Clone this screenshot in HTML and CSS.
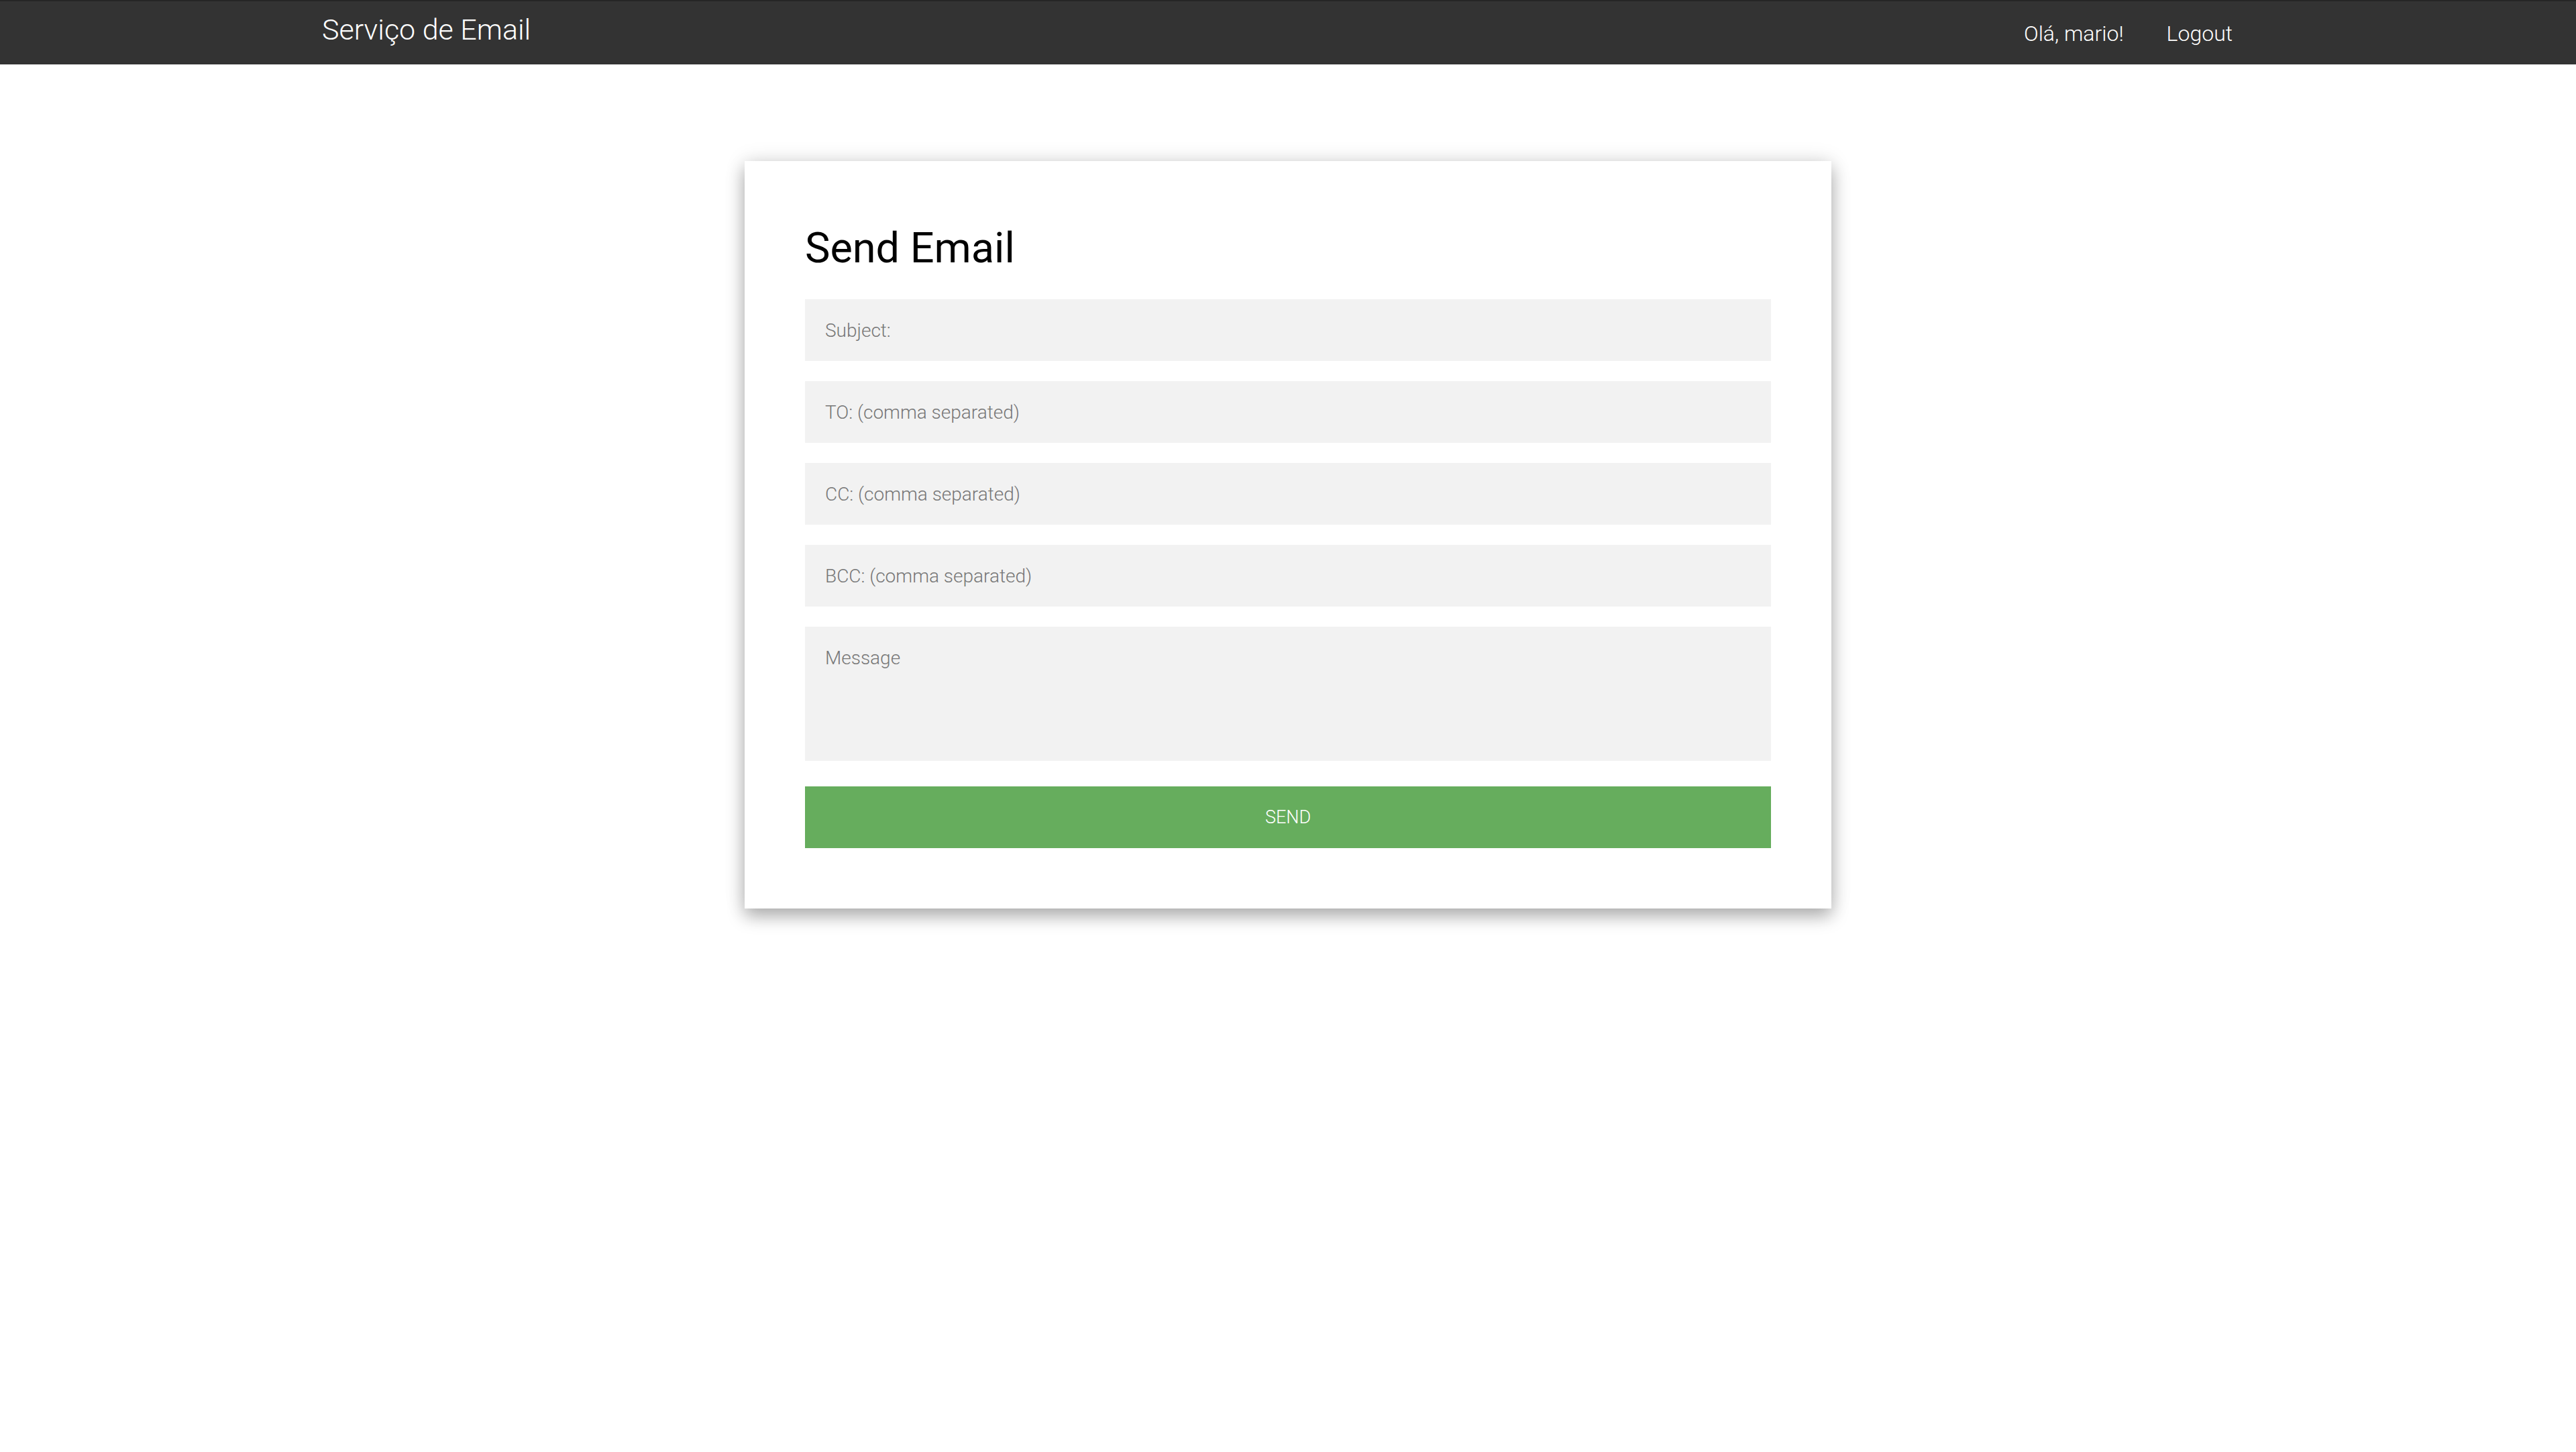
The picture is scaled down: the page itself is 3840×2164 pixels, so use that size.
FILE: index.html
```html
<!DOCTYPE html>
<html lang="pt">
<head>
<meta charset="utf-8">
<title>Serviço de Email</title>
<link rel="stylesheet" href="styles.css">
</head>
<body>
<nav class="navbar">
  <div class="nav-wrapper">
    <a class="brand" href="#">Serviço de Email</a>
    <ul class="nav-links">
      <li><a href="#">Olá, mario!</a></li>
      <li><a href="#">Logout</a></li>
    </ul>
  </div>
</nav>
<main class="main">
  <section class="card">
    <h1 class="card-title">Send Email</h1>
    <form class="email-form">
      <input class="field" type="text" placeholder="Subject:">
      <input class="field" type="text" placeholder="TO: (comma separated)">
      <input class="field" type="text" placeholder="CC: (comma separated)">
      <input class="field" type="text" placeholder="BCC: (comma separated)">
      <textarea class="field field-message" placeholder="Message"></textarea>
      <button class="send-btn" type="button">SEND</button>
    </form>
  </section>
</main>
</body>
</html>
```
FILE: styles.css
```css
* { box-sizing: border-box; }

html, body {
  margin: 0;
  padding: 0;
  background: #ffffff;
  font-family: Roboto, "Noto Sans", "Liberation Sans", sans-serif;
}

body {
  min-height: 100vh;
}

.navbar {
  height: 96px;
  background: #333333;
  border-top: 2px solid #262626;
}

.nav-wrapper {
  width: 75%;
  margin: 0 auto;
  display: flex;
  justify-content: space-between;
  align-items: flex-start;
}

.brand {
  color: #ffffff;
  text-decoration: none;
  font-size: 43px;
  font-weight: 300;
  line-height: 84px;
}

.nav-links {
  list-style: none;
  margin: 0;
  padding: 0;
  display: flex;
}

.nav-links a {
  display: block;
  color: #ffffff;
  text-decoration: none;
  font-size: 32px;
  font-weight: 300;
  line-height: 90px;
  padding: 3px 32px 0;
}

.main {
  display: flex;
  justify-content: center;
  padding: 144px 0 120px;
}

.card {
  width: 1620px;
  background: #ffffff;
  padding: 90px;
  box-shadow: 0 12px 24px rgba(0, 0, 0, 0.28), 0 0 30px rgba(0, 0, 0, 0.12);
}

.card-title {
  margin: 0 0 36px;
  font-size: 63px;
  font-weight: 400;
  line-height: 80px;
  color: #000000;
}

.email-form {
  display: flex;
  flex-direction: column;
  gap: 30px;
}

.field {
  display: block;
  width: 100%;
  height: 92px;
  margin: 0;
  border: none;
  outline: none;
  background: #f2f2f2;
  padding: 0 30px;
  font-family: Roboto, "Noto Sans", "Liberation Sans", sans-serif;
  font-size: 28px;
  font-weight: 300;
  color: #333333;
}

.field::placeholder {
  color: #777777;
  opacity: 1;
}

.field-message {
  height: 200px;
  padding: 30px;
  resize: none;
  line-height: normal;
}

.send-btn {
  display: block;
  width: 100%;
  height: 92px;
  margin-top: 8px;
  border: none;
  background: #66ad5d;
  color: #ffffff;
  font-family: Roboto, "Noto Sans", "Liberation Sans", sans-serif;
  font-size: 27px;
  font-weight: 300;
  cursor: pointer;
}
```
